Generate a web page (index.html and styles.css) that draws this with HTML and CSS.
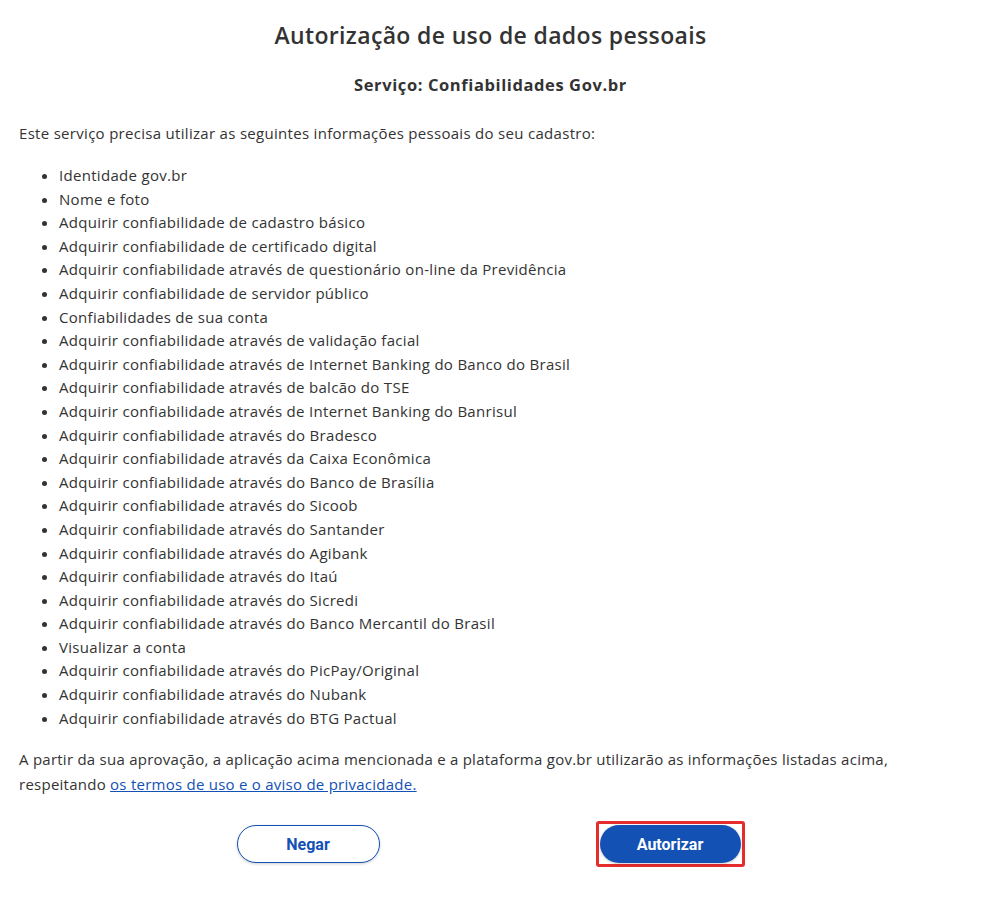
FILE: index.html
```html
<!DOCTYPE html>
<html lang="pt-BR">
<head>
    <meta charset="UTF-8">
    <meta name="viewport" content="width=device-width, initial-scale=1.0">
    <title>Autorização de uso de dados pessoais</title>
    <link rel="stylesheet" href="styles.css">
</head>
<body>
    <div class="container">
        <h1 class="title">Autorização de uso de dados pessoais</h1>
        <h2 class="service">Serviço: Confiabilidades Gov.br</h2>

        <p class="intro">Este serviço precisa utilizar as seguintes informações pessoais do seu cadastro:</p>

        <ul class="scopes">
            <li>Identidade gov.br</li>
            <li>Nome e foto</li>
            <li>Adquirir confiabilidade de cadastro básico</li>
            <li>Adquirir confiabilidade de certificado digital</li>
            <li>Adquirir confiabilidade através de questionário on-line da Previdência</li>
            <li>Adquirir confiabilidade de servidor público</li>
            <li>Confiabilidades de sua conta</li>
            <li>Adquirir confiabilidade através de validação facial</li>
            <li>Adquirir confiabilidade através de Internet Banking do Banco do Brasil</li>
            <li>Adquirir confiabilidade através de balcão do TSE</li>
            <li>Adquirir confiabilidade através de Internet Banking do Banrisul</li>
            <li>Adquirir confiabilidade através do Bradesco</li>
            <li>Adquirir confiabilidade através da Caixa Econômica</li>
            <li>Adquirir confiabilidade através do Banco de Brasília</li>
            <li>Adquirir confiabilidade através do Sicoob</li>
            <li>Adquirir confiabilidade através do Santander</li>
            <li>Adquirir confiabilidade através do Agibank</li>
            <li>Adquirir confiabilidade através do Itaú</li>
            <li>Adquirir confiabilidade através do Sicredi</li>
            <li>Adquirir confiabilidade através do Banco Mercantil do Brasil</li>
            <li>Visualizar a conta</li>
            <li>Adquirir confiabilidade através do PicPay/Original</li>
            <li>Adquirir confiabilidade através do Nubank</li>
            <li>Adquirir confiabilidade através do BTG Pactual</li>
        </ul>

        <p class="notice">
            A partir da sua aprovação, a aplicação acima mencionada e a plataforma gov.br utilizarão as informações listadas acima,
            respeitando <a href="#">os termos de uso e o aviso de privacidade.</a>
        </p>

        <div class="actions">
            <button class="btn btn-secondary" type="button">Negar</button>
            <!-- destaque vermelho em volta do botão -->
            <span class="highlight">
                <button class="btn btn-primary" type="button">Autorizar</button>
            </span>
        </div>
    </div>
</body>
</html>
```

FILE: styles.css
```css
body {
    margin: 0;
    background-color: white;
    font-family: "Open Sans", Lato, sans-serif;
    color: #333;
}
.container {
    padding: 0 19px;
}
.title {
    margin: 21px 0 0;
    font-size: 23px;
    line-height: 28px;
    font-weight: 600;
    letter-spacing: 0.35px;
    text-align: center;
    color: #333;
}
.service {
    margin: 26px 0 0;
    font-size: 16.5px;
    line-height: 20px;
    font-weight: 700;
    letter-spacing: 0.6px;
    text-align: center;
    color: #333;
}
.intro {
    margin: 28px 0 0;
    font-size: 15px;
    line-height: 20px;
    letter-spacing: 0.3px;
}
.scopes {
    margin: 21px 0 0;
    padding-left: 40px;
    font-size: 15px;
    line-height: 23.6px;
    letter-spacing: 0.3px;
}
.notice {
    margin: 17px 0 0;
    font-size: 15px;
    line-height: 25px;
    letter-spacing: 0.25px;
}
.notice a {
    color: #1351b4;
}
.actions {
    display: flex;
    justify-content: center;
    align-items: center;
    gap: 216px;
    margin-top: 24px;
}
.btn {
    height: 38px;
    padding: 0 16px;
    border-radius: 19px;
    font-family: Roboto, Arial, sans-serif;
    font-size: 16px;
    font-weight: 700;
    cursor: pointer;
    box-shadow: 0 1px 3px rgba(0, 0, 0, 0.2);
}
.btn-secondary {
    width: 143px;
    background: white;
    color: #1351b4;
    border: 1px solid #1351b4;
}
.btn-primary {
    width: 141px;
    background: #1351b4;
    color: white;
    border: none;
}
.highlight {
    display: inline-flex;
    padding: 1px;
    border: 3px solid #e52d2d;
    border-radius: 3px;
}
```
